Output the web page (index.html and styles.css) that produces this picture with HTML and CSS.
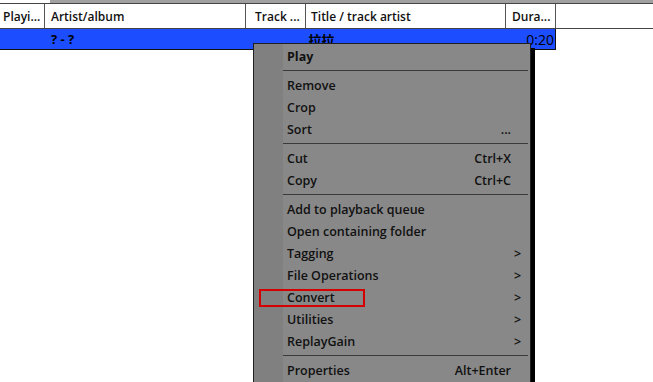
FILE: index.html
```html
<!DOCTYPE html>
<html lang="en">
<head>
    <meta charset="UTF-8">
    <title>Playlist context menu</title>
    <link rel="stylesheet" href="styles.css">
</head>
<body>
    <div class="topbar">
        <div class="topbar-blank"></div>
        <div class="topbar-fill"></div>
    </div>

    <div class="header">
        <div class="col col-playing">Playi...</div>
        <div class="col col-artist">Artist/album</div>
        <div class="col col-track">Track ...</div>
        <div class="col col-title">Title / track artist</div>
        <div class="col col-duration">Dura...</div>
        <div class="col col-rest"></div>
    </div>

    <div class="row selected">
        <div class="col col-playing"></div>
        <div class="col col-artist bold">? - ?</div>
        <div class="col col-track"></div>
        <div class="col col-title bold">拉拉</div>
        <div class="col col-duration num">0:20</div>
    </div>

    <div class="menu">
        <div class="item bold"><span class="label">Play</span><span class="key"></span><span class="arrow"></span></div>
        <div class="sep"></div>
        <div class="item"><span class="label">Remove</span><span class="key"></span><span class="arrow"></span></div>
        <div class="item"><span class="label">Crop</span><span class="key"></span><span class="arrow"></span></div>
        <div class="item"><span class="label">Sort</span><span class="key">...</span><span class="arrow"></span></div>
        <div class="sep"></div>
        <div class="item"><span class="label">Cut</span><span class="key">Ctrl+X</span><span class="arrow"></span></div>
        <div class="item"><span class="label">Copy</span><span class="key">Ctrl+C</span><span class="arrow"></span></div>
        <div class="sep"></div>
        <div class="item"><span class="label">Add to playback queue</span><span class="key"></span><span class="arrow"></span></div>
        <div class="item"><span class="label">Open containing folder</span><span class="key"></span><span class="arrow"></span></div>
        <div class="item"><span class="label">Tagging</span><span class="key"></span><span class="arrow">&gt;</span></div>
        <div class="item"><span class="label">File Operations</span><span class="key"></span><span class="arrow">&gt;</span></div>
        <div class="item"><span class="label">Convert</span><span class="key"></span><span class="arrow">&gt;</span></div>
        <div class="item"><span class="label">Utilities</span><span class="key"></span><span class="arrow">&gt;</span></div>
        <div class="item"><span class="label">ReplayGain</span><span class="key"></span><span class="arrow">&gt;</span></div>
        <div class="sep"></div>
        <div class="item"><span class="label">Properties</span><span class="key">Alt+Enter</span><span class="arrow"></span></div>
    </div>

    <!-- annotation box around "Convert" -->
    <div class="highlight"></div>
</body>
</html>
```

FILE: styles.css
```css
body {
    margin: 0;
    background-color: #ffffff;
    color: #111111;
    font-family: "Open Sans", "Noto Sans", "Noto Sans CJK SC", sans-serif;
    font-size: 12px;
    font-weight: 600;
    overflow: hidden;
}

.bold {
    font-weight: 700;
}

/* top strip above the column headers */
.topbar {
    display: flex;
    height: 3px;
}

.topbar-blank {
    width: 50px;
}

.topbar-fill {
    flex: 1;
    background-color: #a0a0a0;
}

.header {
    display: flex;
    height: 24px;
    border-top: 1px solid #444444;
    border-bottom: 1px solid #444444;
}

.col {
    display: flex;
    align-items: center;
    box-sizing: border-box;
    padding-left: 7px;
    white-space: nowrap;
    overflow: hidden;
}

.header .col {
    border-right: 1px solid #555555;
}

.header .col-rest {
    flex: 1;
    border-right: none;
}

.col-playing {
    width: 45px;
    padding-left: 3px;
}

.col-artist {
    width: 201px;
    padding-left: 6px;
}

.col-track {
    width: 60px;
    padding-left: 9px;
}

.col-title {
    width: 200px;
    padding-left: 5px;
}

.col-duration {
    width: 50px;
    padding-left: 6px;
}

.row {
    display: flex;
    width: 555px;
    height: 20px;
    border-bottom: 1px solid #111111;
    border-right: 1px solid #111111;
    font-size: 13px;
}

.row.selected {
    background-color: #1c4dff;
    color: #000000;
}

.row .col-title {
    padding-left: 3px;
}

.row .num {
    justify-content: flex-end;
    padding-right: 1px;
    font-size: 14px;
    font-weight: 500;
}

/* context menu */
.menu {
    position: absolute;
    left: 253px;
    top: 43px;
    width: 278px;
    box-sizing: border-box;
    padding: 1px 0 4px;
    border: 1px solid #202020;
    background: linear-gradient(to right, #808080 29px, #888888 29px);
    box-shadow: 4px 5px 0 #000000;
    font-size: 12.5px;
}

.item {
    display: flex;
    align-items: center;
    height: 22px;
    padding-left: 33px;
}

.item .label {
    flex: 1;
}

.item .key {
    text-align: right;
}

.item .arrow {
    width: 16px;
    padding-left: 3px;
}

.sep {
    height: 1px;
    margin: 3px 2px 3px 29px;
    background-color: #3a3a3a;
}

.highlight {
    position: absolute;
    left: 259px;
    top: 289px;
    width: 102px;
    height: 14px;
    border: 2px solid #d40000;
}
```
